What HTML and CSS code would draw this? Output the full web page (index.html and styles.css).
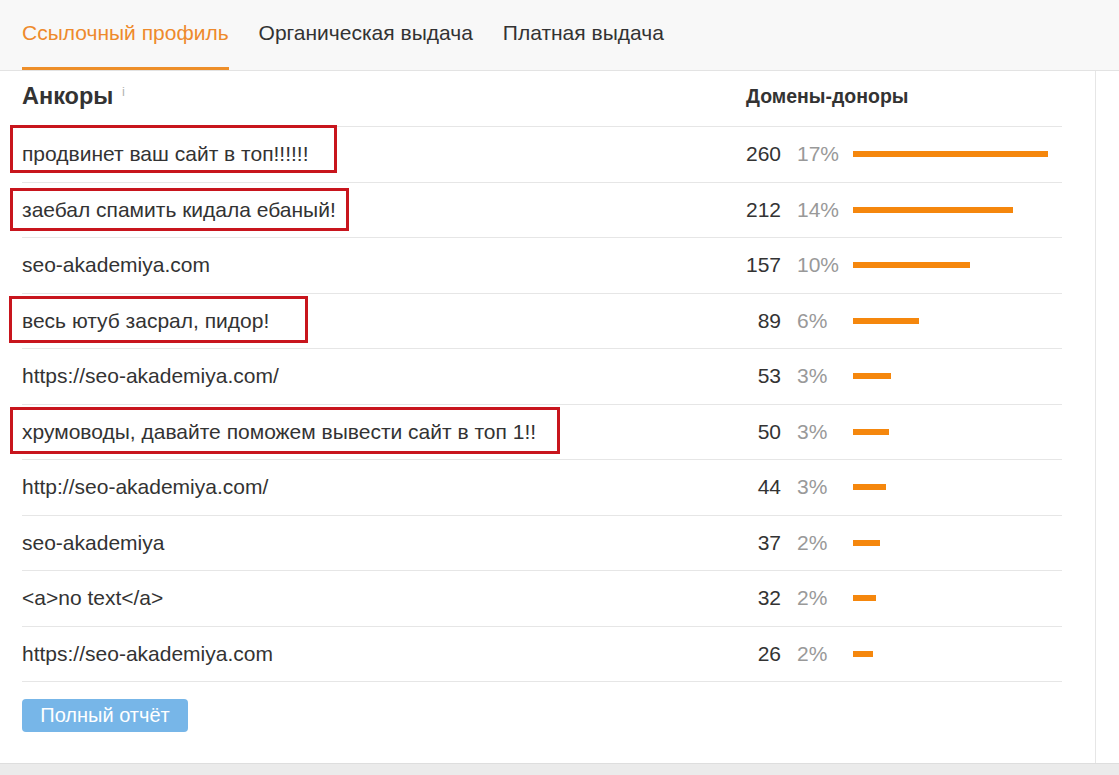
FILE: index.html
```html
<!DOCTYPE html>
<html lang="ru">

<head>
	<title>Анкоры</title>
	<meta charset="UTF-8">
	<meta name="viewport" content="width=device-width, initial-scale=1.0">
	<link rel="stylesheet" href="styles.css">
</head>

<body>
	<nav class="tabs">
		<a class="tab active" href="#">Ссылочный профиль</a>
		<a class="tab" href="#">Органическая выдача</a>
		<a class="tab" href="#">Платная выдача</a>
	</nav>

	<div class="panel">
		<div class="anchors">
			<div class="head">
				<div class="head-title">Анкоры <sup class="hint">i</sup></div>
				<div class="head-donors">Домены-доноры</div>
			</div>

			<div class="row">
				<div class="anchor"><span class="mark mark-wide">продвинет ваш сайт в топ!!!!!!</span></div>
				<div class="count">260</div>
				<div class="pct">17%</div>
				<div class="bar-cell"><div class="bar" style="width: 195px"></div></div>
			</div>
			<div class="row">
				<div class="anchor"><span class="mark mark-tight">заебал спамить кидала ебаный!</span></div>
				<div class="count">212</div>
				<div class="pct">14%</div>
				<div class="bar-cell"><div class="bar" style="width: 160px"></div></div>
			</div>
			<div class="row">
				<div class="anchor">seo-akademiya.com</div>
				<div class="count">157</div>
				<div class="pct">10%</div>
				<div class="bar-cell"><div class="bar" style="width: 117px"></div></div>
			</div>
			<div class="row">
				<div class="anchor"><span class="mark mark-loose">весь ютуб засрал, пидор!</span></div>
				<div class="count">89</div>
				<div class="pct">6%</div>
				<div class="bar-cell"><div class="bar" style="width: 66px"></div></div>
			</div>
			<div class="row">
				<div class="anchor">https://seo-akademiya.com/</div>
				<div class="count">53</div>
				<div class="pct">3%</div>
				<div class="bar-cell"><div class="bar" style="width: 38px"></div></div>
			</div>
			<div class="row">
				<div class="anchor"><span class="mark">хрумоводы, давайте поможем вывести сайт в топ 1!!</span></div>
				<div class="count">50</div>
				<div class="pct">3%</div>
				<div class="bar-cell"><div class="bar" style="width: 36px"></div></div>
			</div>
			<div class="row">
				<div class="anchor">http://seo-akademiya.com/</div>
				<div class="count">44</div>
				<div class="pct">3%</div>
				<div class="bar-cell"><div class="bar" style="width: 33px"></div></div>
			</div>
			<div class="row">
				<div class="anchor">seo-akademiya</div>
				<div class="count">37</div>
				<div class="pct">2%</div>
				<div class="bar-cell"><div class="bar" style="width: 27px"></div></div>
			</div>
			<div class="row">
				<div class="anchor">&lt;a&gt;no text&lt;/a&gt;</div>
				<div class="count">32</div>
				<div class="pct">2%</div>
				<div class="bar-cell"><div class="bar" style="width: 23px"></div></div>
			</div>
			<div class="row">
				<div class="anchor">https://seo-akademiya.com</div>
				<div class="count">26</div>
				<div class="pct">2%</div>
				<div class="bar-cell"><div class="bar" style="width: 20px"></div></div>
			</div>
		</div>

		<button class="btn" type="button">Полный отчёт</button>
	</div>

	<div class="footer-strip"></div>
</body>

</html>
```

FILE: styles.css
```css
* {
	box-sizing: border-box;
}

body {
	margin: 0;
	font-family: "Liberation Sans", Arial, sans-serif;
	color: #333;
	background: #fff;
}

/* Top tabs */
.tabs {
	display: flex;
	gap: 30px;
	height: 71px;
	padding-left: 22px;
	background: #f8f8f8;
	border-bottom: 1px solid #e3e3e3;
}

.tab {
	display: flex;
	align-items: center;
	padding-bottom: 1px;
	border-bottom: 3px solid transparent;
	color: #333;
	font-size: 21px;
	text-decoration: none;
}

.tab.active {
	color: #ee8a2c;
	border-bottom-color: #ee8f2a;
}

/* Panel */
.panel {
	width: 1096px;
	height: 692px;
	padding: 0 33px 0 22px;
	border-right: 1px solid #e6e6e6;
}

.head,
.row {
	display: grid;
	grid-template-columns: 699px 60px 72px 1fr;
	align-items: center;
	border-bottom: 1px solid #e6e6e6;
}

.head {
	height: 56px;
	padding-bottom: 4px;
}

.head-title {
	font-size: 23.5px;
	font-weight: bold;
}

.hint {
	margin-left: 2px;
	font-size: 13px;
	font-weight: normal;
	color: #b3b3b3;
	vertical-align: 8px;
}

.head-donors {
	grid-column: 2 / -1;
	padding-left: 25px;
	font-size: 19.5px;
	font-weight: bold;
}

.row {
	height: 55.5px;
	font-size: 21px;
}

.count {
	text-align: right;
}

.pct {
	padding-left: 16px;
	color: #999;
}

.bar {
	height: 6px;
	background: #f5870d;
}

/* Red annotation frame */
.mark {
	position: relative;
}

.mark::after {
	content: "";
	position: absolute;
	top: -13px;
	bottom: -11px;
	left: -12px;
	right: -24px;
	border: 3px solid #c8151d;
}

.mark-wide::after {
	top: -17px;
	bottom: -8px;
	right: -28px;
}

.mark-tight::after {
	top: -10px;
	bottom: -10px;
	right: -13px;
}

.mark-loose::after {
	left: -13px;
	right: -39px;
}

.btn {
	margin-top: 17px;
	width: 166px;
	height: 33px;
	padding: 0;
	border: none;
	border-radius: 4px;
	background: #77b6e8;
	color: #fff;
	font-family: inherit;
	font-size: 20px;
	cursor: pointer;
}

.footer-strip {
	height: 12px;
	background: #ebebeb;
	border-top: 1px solid #dedede;
}
```
